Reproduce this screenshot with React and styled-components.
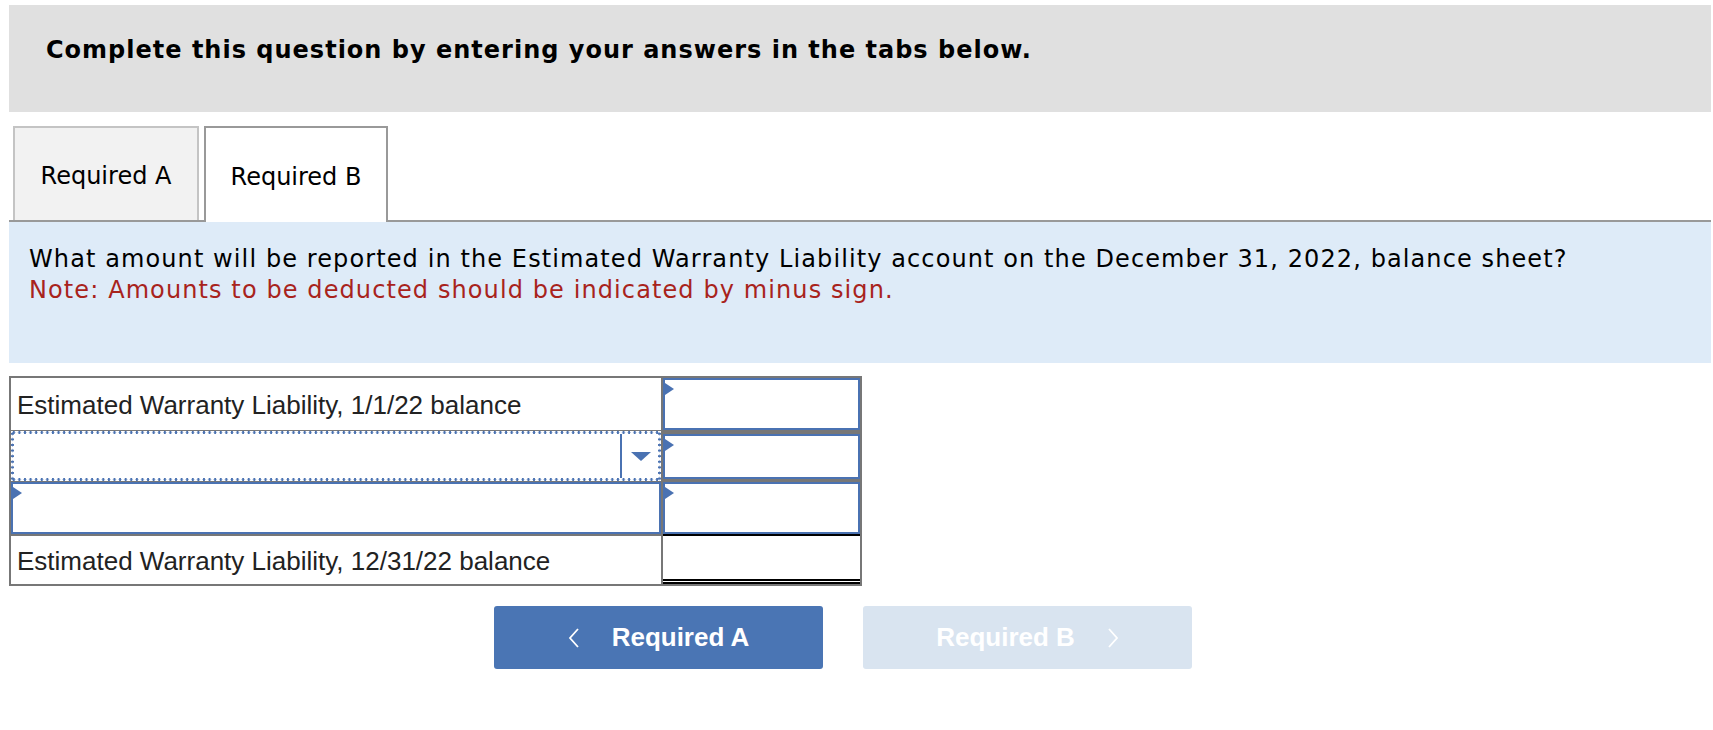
import React from "react";
import styled, { createGlobalStyle } from "styled-components";

const GlobalStyle = createGlobalStyle`
  body {
    margin: 0;
    background: #fff;
    font-family: "DejaVu Sans", Verdana, sans-serif;
  }
`;

const Page = styled.div`
  margin: 5px 2px 0 9px;
`;

const Banner = styled.div`
  height: 107px;
  box-sizing: border-box;
  background: #e0e0e0;
  padding: 31px 37px 0;
  font-size: 24px;
  font-weight: bold;
  letter-spacing: 1px;
  color: #000;
`;

const TabBar = styled.div`
  margin-top: 14px;
  display: flex;
  gap: 5px;
  padding-left: 4px;
  border-bottom: 2px solid #999;
  height: 94px;
`;

const Tab = styled.div`
  width: ${(p) => (p.$active ? "184px" : "186px")};
  box-sizing: border-box;
  display: flex;
  align-items: center;
  justify-content: center;
  padding-top: 4px;
  font-size: 24px;
  color: #000;
  background: ${(p) => (p.$active ? "#fff" : "#f2f2f2")};
  border: 2px solid ${(p) => (p.$active ? "#999" : "#c4c4c4")};
  border-bottom: none;
  height: ${(p) => (p.$active ? "96px" : "94px")};
`;

const Question = styled.div`
  height: 141px;
  box-sizing: border-box;
  background: #deebf8;
  padding: 22px 20px 0;
  font-size: 24px;
  line-height: 30.6px;
  letter-spacing: 1.1px;
  color: #000;
`;

const Note = styled.div`
  color: #a8231c;
`;

const Sheet = styled.div`
  margin-top: 13px;
  width: 853px;
  box-sizing: border-box;
  display: grid;
  grid-template-columns: 650px 197px;
  grid-template-rows: 52px 48px 52px 48px;
  gap: 2px;
  padding: 2px;
  background: #777;
  font-family: "Liberation Sans", Arial, sans-serif;
`;

const Cell = styled.div`
  position: relative;
  background: #fff;
  box-sizing: border-box;
  display: flex;
  align-items: center;
`;

const Label = styled(Cell)`
  padding-left: 6px;
  padding-top: 2px;
  font-size: 26px;
  color: #222;
`;

const Entry = styled(Cell)`
  border: 2px solid #4a72b2;
  margin: ${(p) => p.$inset || "0"};
`;

const Marker = styled.span`
  position: absolute;
  left: 0;
  top: 3px;
  width: 0;
  height: 0;
  border-top: 6px solid transparent;
  border-bottom: 6px solid transparent;
  border-left: 9px solid #4a72b2;
`;

const dot = "radial-gradient(circle, #4a72b2 1.1px, transparent 1.6px)";

const Picker = styled(Cell)`
  margin: -1px 0;
  padding: 3px;
  justify-content: flex-end;
  background:
    ${dot} left top / 5.6px 3px repeat-x,
    ${dot} left bottom / 5.6px 3px repeat-x,
    ${dot} left top / 3px 5.6px repeat-y,
    ${dot} right top / 3px 5.6px repeat-y,
    #fff;
`;

const PickerArrow = styled.div`
  width: 35px;
  height: 44px;
  border-left: 2px solid #4a72b2;
  display: flex;
  align-items: center;
  justify-content: center;
  padding-left: 1px;
  &::after {
    content: "";
    border-left: 10px solid transparent;
    border-right: 10px solid transparent;
    border-top: 9px solid #4a72b2;
  }
`;

const Total = styled(Cell)`
  border-top: 2px solid #000;
  border-bottom: 5px double #000;
  margin-top: -2px;
`;

const Nav = styled.div`
  margin: 20px 0 0 485px;
  display: flex;
  gap: 40px;
`;

const NavButton = styled.div`
  width: 329px;
  height: 63px;
  border-radius: 3px;
  display: flex;
  align-items: center;
  justify-content: center;
  gap: 33px;
  font-family: "Liberation Sans", Arial, sans-serif;
  font-weight: bold;
  font-size: 26px;
  color: #fff;
  background: ${(p) => (p.$disabled ? "#d9e4f0" : "#4a75b4")};
`;

const Chevron = ({ dir }) => (
  <svg width="11" height="20" viewBox="0 0 11 20">
    <path
      d={dir === "left" ? "M10 1 L2 10 L10 19" : "M1 1 L9 10 L1 19"}
      fill="none"
      stroke="#fff"
      strokeWidth="1.8"
    />
  </svg>
);

export default function App() {
  return (
    <Page>
      <GlobalStyle />
      <Banner>Complete this question by entering your answers in the tabs below.</Banner>
      <TabBar>
        <Tab>Required A</Tab>
        <Tab $active>Required B</Tab>
      </TabBar>
      <Question>
        What amount will be reported in the Estimated Warranty Liability account on the December 31, 2022, balance sheet?
        <Note>Note: Amounts to be deducted should be indicated by minus sign.</Note>
      </Question>
      <Sheet>
        <Label>Estimated Warranty Liability, 1/1/22 balance</Label>
        <Entry>
          <Marker />
        </Entry>
        <Picker>
          <PickerArrow />
        </Picker>
        <Entry $inset="2px 0 1px">
          <Marker />
        </Entry>
        <Entry>
          <Marker />
        </Entry>
        <Entry>
          <Marker />
        </Entry>
        <Label>Estimated Warranty Liability, 12/31/22 balance</Label>
        <Total />
      </Sheet>
      <Nav>
        <NavButton>
          <Chevron dir="left" />
          Required A
        </NavButton>
        <NavButton $disabled>
          Required B
          <Chevron dir="right" />
        </NavButton>
      </Nav>
    </Page>
  );
}
